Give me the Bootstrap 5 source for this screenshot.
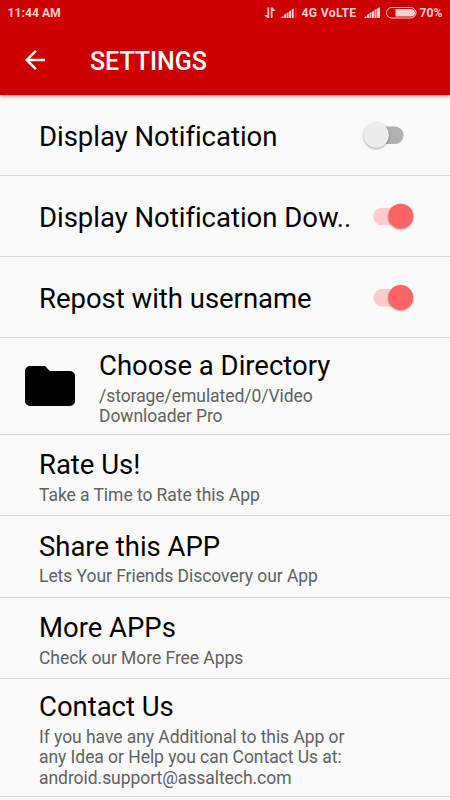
<!DOCTYPE html>
<html lang="en">
<head>
<meta charset="utf-8">
<meta name="viewport" content="width=device-width, initial-scale=1">
<title>Settings</title>
<link href="https://cdn.jsdelivr.net/npm/bootstrap@5.3.0/dist/css/bootstrap.min.css" rel="stylesheet">
<style>
html, body { height: 800px; overflow: hidden; }
body { font-family: Roboto, sans-serif; background: #fafafa; color: #000; width: 450px; }
.app-header { background: #c00; height: 95px; box-shadow: 0 1px 4px rgba(0,0,0,.45); color: #fff; position: relative; z-index: 1; }
.status-bar { height: 25px; font-size: 12.2px; font-weight: 700; line-height: 14px; color: #f8cfcf; padding: 1px 7.5px 0 7.5px; }
.status-bar svg { fill: #f8cfcf; }
.net-label { margin-left: 4px; margin-right: 7px; letter-spacing: .3px; }
.battery { margin-left: 5px; margin-right: 3px; }
.tool-bar { height: 70px; padding-left: 20px; }
.tool-bar h1 { font-size: 25px; font-weight: 500; line-height: 29px; padding-left: 40px; padding-top: 2px; letter-spacing: -.04px; }
.setting { height: 81px; padding: 0 0 0 39px; border: 0; background: transparent; color: #000; border-radius: 0; }
.list-group-flush > .setting.list-group-item { border-bottom: 1px solid #d6d6d6; }
.setting.taller { height: 82px; }
.setting.folder-row { height: 97px; padding-left: 25px; }
.setting.contact-row { height: 118px; }
.setting-title { font-size: 27.5px; line-height: 32px; white-space: nowrap; letter-spacing: -.02px; }
.setting-note { font-size: 17.5px; line-height: 20.5px; color: #616161; margin-top: 3.5px; white-space: nowrap; letter-spacing: -.05px; }
.setting-body { padding-top: 4px; }
.folder-row .setting-body { margin-left: 24px; padding-top: 5px; }
.toggle { width: 50px; height: 34px; flex: none; margin-left: auto; margin-right: 32px; }
.toggle.toggle-off { margin-right: 42px; }
.toggle circle { filter: drop-shadow(0 1.5px 1px rgba(0,0,0,.35)); }
</style>
</head>
<body>
<header class="app-header">
  <div class="status-bar d-flex align-items-center justify-content-between">
    <span>11:44 AM</span>
    <div class="d-flex align-items-center">
      <svg width="12" height="12" viewBox="0 0 12 12"><path d="M3.500 0.500h1.700v10.500h-1.700L0.300 8h3.200zM6.800 0.500h1.700l3.200 3.500h-3.200v7h-1.700z"/></svg>
      <svg style="margin-left:5px" width="17" height="12" viewBox="0 0 17 12"><path d="M0 11L2.500 8.500v2.500zM3 11v-3.300l2-1v4.300zM5.500 11v-4.700l2-1.300v6zM8 11v-6.500l2-1.300v7.800zM10.700 11v-8.300l2-1.200v9.500z"/><path d="M14 11v-10l1.500-.7v10.700z" opacity=".2"/></svg>
      <span class="net-label">4G VoLTE</span>
      <svg width="17" height="12" viewBox="0 0 17 12"><path d="M0 11L2.500 8.500v2.500zM3 11v-3.300l2-1v4.300zM5.500 11v-4.700l2-1.300v6zM8 11v-6.300l2-1.300v7.600zM10.500 11v-8l2-1.200v9.200zM13 11v-9.500l3-1.200v10.700z"/></svg>
      <svg class="battery" width="31" height="12" viewBox="0 0 31 12"><rect x=".5" y=".5" width="29.500" height="10.500" rx="5.200" style="fill:none;stroke:#f8cfcf"/><path d="M9.500 2H25.200a3.750 3.750 0 0 1 0 7.500H9.500z"/></svg>
      <span>70%</span>
    </div>
  </div>
  <div class="tool-bar d-flex align-items-center">
    <svg width="30" height="30" viewBox="0 0 24 24" fill="#fff"><path d="M20 11H7.830l5.590-5.590L12 4l-8 8 8 8 1.410-1.410L7.830 13H20v-2z"/></svg>
    <h1 class="m-0">SETTINGS</h1>
  </div>
</header>
<main class="list-group list-group-flush">
  <div class="setting list-group-item d-flex align-items-center">
    <div class="setting-title pt-1">Display Notification</div>
    <svg class="toggle toggle-off" viewBox="0 0 50 34"><rect x="8" y="8.500" width="37.500" height="17.500" rx="8.750" fill="#b0b0b0"/><circle cx="18.200" cy="17" r="12.700" fill="#ececec"/></svg>
  </div>
  <div class="setting list-group-item d-flex align-items-center">
    <div class="setting-title pt-1">Display Notification Dow..</div>
    <svg class="toggle" viewBox="0 0 50 34"><rect x="5.300" y="8.800" width="37" height="17.500" rx="8.750" fill="#fccccc"/><circle cx="32.700" cy="17.200" r="12.500" fill="#fa6464"/></svg>
  </div>
  <div class="setting list-group-item d-flex align-items-center">
    <div class="setting-title pt-1">Repost with username</div>
    <svg class="toggle" viewBox="0 0 50 34"><rect x="5.300" y="9" width="37" height="17.500" rx="8.750" fill="#fccccc"/><circle cx="32.700" cy="17.500" r="12.500" fill="#fa6464"/></svg>
  </div>
  <div class="setting folder-row list-group-item d-flex align-items-center">
    <svg style="margin-top:1px" width="50" height="41" viewBox="0 0 50 41"><path d="M5 0H20L25 5H45a5 5 0 0 1 5 5V35a5 5 0 0 1-5 5H5a5 5 0 0 1-5-5V5a5 5 0 0 1 5-5z"/></svg>
    <div class="setting-body">
      <div class="setting-title">Choose a Directory</div>
      <div class="setting-note">/storage/emulated/0/Video<br>Downloader Pro</div>
    </div>
  </div>
  <div class="setting list-group-item d-flex align-items-center">
    <div class="setting-body">
      <div class="setting-title">Rate Us!</div>
      <div class="setting-note">Take a Time to Rate this App</div>
    </div>
  </div>
  <div class="setting taller list-group-item d-flex align-items-center">
    <div class="setting-body">
      <div class="setting-title">Share this APP</div>
      <div class="setting-note">Lets Your Friends Discovery our App</div>
    </div>
  </div>
  <div class="setting list-group-item d-flex align-items-center">
    <div class="setting-body">
      <div class="setting-title">More APPs</div>
      <div class="setting-note">Check our More Free Apps</div>
    </div>
  </div>
  <div class="setting contact-row list-group-item d-flex align-items-center">
    <div class="setting-body">
      <div class="setting-title">Contact Us</div>
      <div class="setting-note">If you have any Additional to this App or<br>any Idea or Help you can Contact Us at:<br>android.support@assaltech.com</div>
    </div>
  </div>
</main>
<script src="https://cdn.jsdelivr.net/npm/bootstrap@5.3.0/dist/js/bootstrap.bundle.min.js"></script>
</body>
</html>
